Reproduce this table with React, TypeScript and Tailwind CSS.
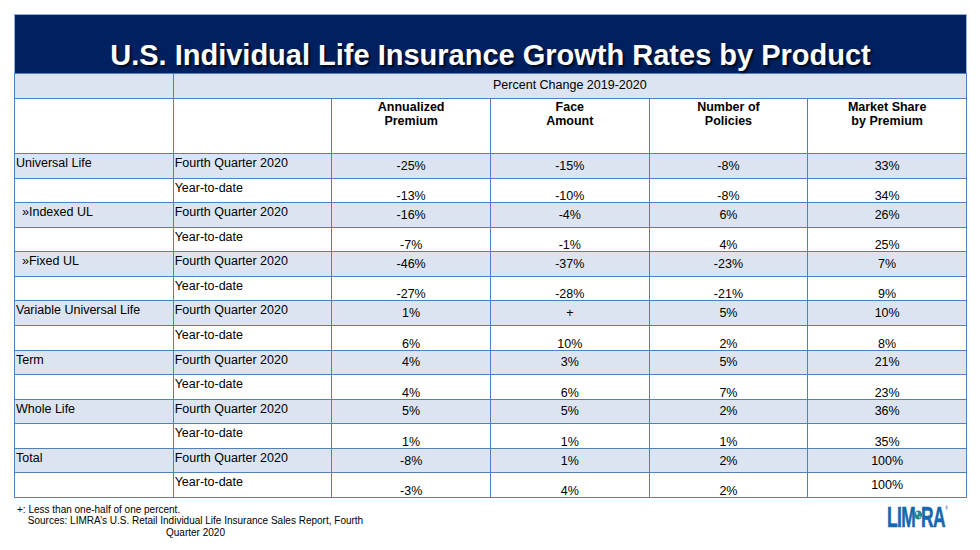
import React from "react";

type Row = {
  product: string;
  indent?: boolean;
  period: string;
  values: string[];
  ytd: boolean;
};

const data: [string, boolean, string[], string[]][] = [
  ["Universal Life", false, ["-25%", "-15%", "-8%", "33%"], ["-13%", "-10%", "-8%", "34%"]],
  ["»Indexed UL", true, ["-16%", "-4%", "6%", "26%"], ["-7%", "-1%", "4%", "25%"]],
  ["»Fixed UL", true, ["-46%", "-37%", "-23%", "7%"], ["-27%", "-28%", "-21%", "9%"]],
  ["Variable Universal Life", false, ["1%", "+", "5%", "10%"], ["6%", "10%", "2%", "8%"]],
  ["Term", false, ["4%", "3%", "5%", "21%"], ["4%", "6%", "7%", "23%"]],
  ["Whole Life", false, ["5%", "5%", "2%", "36%"], ["1%", "1%", "1%", "35%"]],
  ["Total", false, ["-8%", "1%", "2%", "100%"], ["-3%", "4%", "2%", "100%"]],
];

const rows: Row[] = data.flatMap(([product, indent, q, y]) => [
  { product, indent, period: "Fourth Quarter 2020", values: q, ytd: false },
  { product: "", indent, period: "Year-to-date", values: y, ytd: true },
]);

const cell = "border border-[#4f81bd] p-0";

// globe drawn wide because the whole logo is squeezed horizontally
function Globe() {
  return (
    <svg width="14" height="22" viewBox="0 0 14 22" className="shrink-0 mx-[-2px]">
      <ellipse cx="7" cy="9" rx="6.5" ry="4.5" fill="#24868a" />
      <path d="M3 7 Q5 5.5 7 8 Q5.5 10 4 9.5 Z M8 10 Q11 9.5 11.5 11 Q10 13 8.5 12.5 Z" fill="#86c9b0" />
      <ellipse cx="5" cy="7" rx="2" ry="1.2" fill="#d6efee" opacity="0.85" />
    </svg>
  );
}

export default function App() {
  return (
    <div className="w-[980px] h-[550px] bg-white pt-[14px] pl-[14px] font-['Liberation_Sans',Arial,sans-serif] text-black overflow-hidden">
      <div className="w-[953px] h-[59px] bg-[#002060] border border-b-0 border-[#8db3e2] pt-[26px] text-center">
        <h1 className="text-white font-bold text-[29px] leading-[29px] [text-shadow:2px_2px_2px_rgba(0,0,0,0.7)]">
          U.S. Individual Life Insurance Growth Rates by Product
        </h1>
      </div>
      <table className="w-[953px] table-fixed border-collapse text-[12.5px]">
        <tbody>
          <tr className="h-[25px] bg-[#dbe4f0]">
            <td className={cell}></td>
            <td colSpan={5} className={`${cell} text-center align-top pt-[2px]`}>
              Percent Change 2019-2020
            </td>
          </tr>
          <tr className="h-[55px]">
            <td className={cell}></td>
            <td className={cell}></td>
            {["Annualized|Premium", "Face|Amount", "Number of|Policies", "Market Share|by Premium"].map(h => (
              <td key={h} className={`${cell} align-top text-center font-bold pt-[1px] leading-[14px]`}>
                {h.split("|")[0]}
                <br />
                {h.split("|")[1]}
              </td>
            ))}
          </tr>
          {rows.map((r, i) => (
            <tr key={i} className={`h-[24.57px] ${r.ytd ? "bg-white" : "bg-[#dbe4f0]"}`}>
              <td className={`${cell} align-top ${r.indent && r.product ? "pl-[7px]" : "pl-[1px]"}`}>{r.product}</td>
              <td className={`${cell} align-top pl-[1px]`}>{r.period}</td>
              {r.values.map((v, j) => (
                <td
                  key={j}
                  className={`${cell} text-center leading-[12px] ${
                    r.ytd && !(i === rows.length - 1 && j === 3) ? "align-bottom" : "align-middle"
                  }`}
                >
                  {v}
                </td>
              ))}
            </tr>
          ))}
        </tbody>
      </table>
      <div className="w-[953px] flex justify-between">
        <div className="text-[10px] leading-[11.5px] pt-[6px]">
          <div className="pl-[3px]">+: Less than one-half of one percent.</div>
          <div className="w-[354px] text-center pl-[9px]">
            Sources: LIMRA’s U.S. Retail Individual Life Insurance Sales Report, Fourth
            <br />
            Quarter 2020
          </div>
        </div>
        <div className="mr-[19px] mt-[8px] h-[24px] flex flex-nowrap items-start whitespace-nowrap scale-x-[0.58] origin-right font-black text-[30px] leading-[22px] text-[#1667b1] tracking-[-1px] [-webkit-text-stroke:0.6px_#1667b1]">
          <span>LIM</span>
          <Globe />
          <span>RA</span>
          <span className="text-[5px] leading-[5px] tracking-normal [-webkit-text-stroke:0px] ml-[1px]">®</span>
        </div>
      </div>
    </div>
  );
}
